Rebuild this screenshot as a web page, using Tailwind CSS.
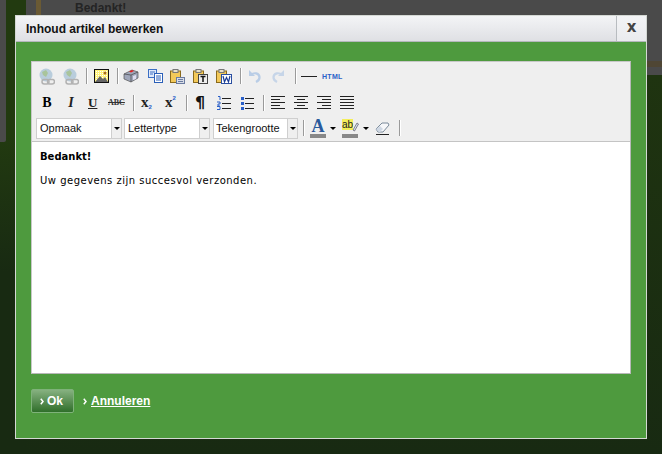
<!DOCTYPE html>
<html lang="en">
<head>
  <meta charset="UTF-8" />
  <title>Inhoud artikel bewerken</title>
  <script src="https://cdn.jsdelivr.net/npm/@tailwindcss/browser@4"></script>
</head>
<body class="relative w-[662px] h-[454px] overflow-hidden bg-[#182a12] font-['Liberation_Sans',sans-serif]">
  <!-- page behind the overlay -->
  <div class="flex h-full">
    <div class="w-[26px] shrink-0 bg-gradient-to-b from-[#223a10] to-[#182a12] from-30% to-60%">
      <div class="w-[6px] h-[142px] bg-[#4a4a4a] rounded-br-[2px]"></div>
    </div>
    <div class="flex-1 flex flex-col">
      <div class="h-[61px] flex bg-[#4a4a4a]">
        <div class="w-[10px]"></div>
        <div class="w-[5px] bg-[#6a5a34]"></div>
        <div class="ml-[34px] text-[12px] leading-[17px] font-bold text-[#242424]">Bedankt!</div>
      </div>
      <div class="h-[6px] bg-[#4f4634]"></div>
      <div class="h-[8px] bg-[#4a4a4a]"></div>
      <div class="flex-1 bg-gradient-to-b from-[#1f3410] to-[#182a12]"></div>
    </div>
  </div>

  <!-- Dialog -->
  <div class="absolute left-[15px] top-[15px] w-[632px] h-[424px] bg-[#4e9a3e] border border-[#d4d8d4] flex flex-col">
    <div class="h-[26px] flex bg-gradient-to-b from-[#f3f4f6] to-[#dfe0e4] border-b border-[#b4b8bc]">
      <div class="flex-1 pl-[10px] pt-[5px] text-[12px] leading-[16px] font-bold text-[#111]">Inhoud artikel bewerken</div>
      <div class="w-[30px] border-l border-[#b8bcc0] bg-gradient-to-b from-[#f3f4f6] to-[#eaebee] flex items-center justify-center text-[15px] font-bold text-[#444] font-['DejaVu_Sans',sans-serif] pb-[3px]">x</div>
    </div>

    <div class="ml-[15px] mt-[19px] w-[600px] h-[313px] border border-[#c8c8c8] border-r-[#b8b8b8] border-b-[#b8b8b8] bg-white flex flex-col">
      <!-- toolbar -->
      <div class="h-[80px] bg-[#efefef] border-b border-[#c4c4c4] flex flex-col">
        <div class="h-[28px] flex items-center pl-[7px]">
          <svg width="16" height="17" viewBox="0 0 16 17"><circle cx="7" cy="7" r="6.500" fill="#b9cddc"/><path d="M3 4l4-2 2 3-2 4-3-2z" fill="#a9c49b"/><g fill="none" stroke="#b2b2b2" stroke-width="1.500"><rect x="3" y="11.500" width="7" height="4.500" rx="2.200"/><rect x="8.500" y="11.500" width="7" height="4.500" rx="2.200"/></g></svg>
          <svg class="ml-[8px]" width="16" height="17" viewBox="0 0 16 17"><circle cx="7" cy="7" r="6.500" fill="#b9cddc"/><path d="M3 4l4-2 2 3-2 4-3-2z" fill="#a9c49b"/><g fill="none" stroke="#b2b2b2" stroke-width="1.500"><rect x="3" y="11.500" width="7" height="4.500" rx="2.200"/><rect x="8.500" y="11.500" width="7" height="4.500" rx="2.200"/></g></svg>
          <div class="w-[2px] h-[16px] bg-[#9a9a9a] border-r border-white ml-[7px]"></div>
          <svg class="ml-[6px]" width="15" height="14" viewBox="0 0 15 14"><defs><pattern id="dots" width="2" height="2" patternUnits="userSpaceOnUse"><rect width="2" height="2" fill="#fff27a"/><rect width="1" height="1" fill="#fff"/></pattern></defs><rect x=".5" y=".5" width="14" height="13" fill="url(#dots)" stroke="#111"/><path d="M1 13l5-6 3 3 2-2 3 5z" fill="#666"/><circle cx="11" cy="4" r="1.500" fill="#a86a1c"/></svg>
          <div class="w-[2px] h-[16px] bg-[#9a9a9a] border-r border-white ml-[8px]"></div>
          <svg class="ml-[4px]" width="16" height="14" viewBox="0 0 16 14"><path d="M1 5l8-4 6 2v6l-7 4-7-3z" fill="#a0a7ba" stroke="#555" stroke-width=".7"/><path d="M6 2.500L9 1l2 1-3 1.500z" fill="#e02020"/><path d="M8 6l7-3M8 6v7M8 6L1 5" stroke="#444" stroke-width=".7" fill="none"/><path d="M10 7l3-1v4l-3 1z" fill="#dde"/></svg>
          <svg class="ml-[9px]" width="15" height="14" viewBox="0 0 15 14"><rect x=".5" y=".5" width="8" height="8" fill="#dfe9fa" stroke="#3c6fc4"/><path d="M2 3h5M2 5h3" stroke="#3c6fc4"/><rect x="6.500" y="4.500" width="8" height="9" fill="#fff" stroke="#2a5fb8"/><path d="M8 7h5M8 9h5M8 11h5" stroke="#2a5fb8"/></svg>
          <svg class="ml-[7px]" width="15" height="15" viewBox="0 0 15 15"><rect x=".5" y="2" width="10" height="11.500" fill="#f3c959" stroke="#8a6a1c"/><rect x="3" y=".5" width="5" height="3" fill="#e8e0c8" stroke="#777"/><rect x="6.500" y="8.500" width="8" height="6" fill="#d9dde6" stroke="#6a7ba0"/><path d="M8 10.500h5M8 12.500h5" stroke="#6a7ba0"/></svg>
          <svg class="ml-[8px]" width="15" height="15" viewBox="0 0 15 15"><rect x=".5" y="2" width="10" height="11.500" fill="#f3c959" stroke="#8a6a1c"/><rect x="3" y=".5" width="5" height="3" fill="#e8e0c8" stroke="#777"/><rect x="5.500" y="5.500" width="9" height="9" fill="#eee" stroke="#444"/><path d="M7.500 7.500h5M10 7.500v5.500" stroke="#111" stroke-width="1.500"/></svg>
          <svg class="ml-[8px]" width="16" height="15" viewBox="0 0 16 15"><rect x=".5" y="2" width="10" height="11.500" fill="#f3c959" stroke="#8a6a1c"/><rect x="3" y=".5" width="5" height="3" fill="#e8e0c8" stroke="#777"/><rect x="5.500" y="5.500" width="10" height="9" fill="#fff" stroke="#2a4fa0"/><path d="M7 7l1.500 6 2-4.500 2 4.500L14 7" fill="none" stroke="#1a3c96" stroke-width="1.200"/></svg>
          <div class="w-[2px] h-[16px] bg-[#9a9a9a] border-r border-white ml-[8px]"></div>
          <svg class="ml-[6px]" width="13" height="14" viewBox="0 0 13 14"><path d="M1 1v6h6z" fill="#b9cde6"/><path d="M3 6c3-3 8-2 8.500 2 .2 2.500-1.500 4-3.500 5" fill="none" stroke="#b9cde6" stroke-width="2.200"/></svg>
          <svg class="ml-[11px]" width="13" height="14" viewBox="0 0 13 14"><path d="M12 1v6H6z" fill="#c6d5e8"/><path d="M10 6C7 3 2 4 1.500 8c-.2 2.500 1.500 4 3.500 5" fill="none" stroke="#c6d5e8" stroke-width="2.200"/></svg>
          <div class="w-[2px] h-[16px] bg-[#9a9a9a] border-r border-white ml-[10px]"></div>
          <div class="ml-[4px] w-[16px] h-px bg-[#222]"></div>
          <span class="ml-[5px] text-[7px] leading-none font-bold tracking-[0.3px] text-[#2a5fc8]">HTML</span>
        </div>
        <div class="h-[25px] flex items-center pl-[10px]">
          <span class="w-[10px] text-center text-[14px] leading-none font-bold font-['Liberation_Serif',serif] text-black">B</span>
          <span class="w-[8px] ml-[15px] text-center text-[14px] leading-none font-bold italic font-['Liberation_Serif',serif] text-[#222]">I</span>
          <span class="w-[9px] ml-[13px] text-center text-[13px] leading-none font-bold underline font-['Liberation_Serif',serif] text-[#222]">U</span>
          <span class="w-[16px] ml-[11px] text-center text-[8px] leading-none font-bold line-through font-['Liberation_Serif',serif] text-[#333]">ABC</span>
          <div class="w-[2px] h-[16px] bg-[#9a9a9a] border-r border-white ml-[9px]"></div>
          <div class="w-[13px] ml-[6px] flex items-end"><span class="text-[15px] leading-[15px] font-bold font-['Liberation_Serif',serif] text-[#222]">x</span><span class="text-[6px] leading-[6px] font-bold text-[#2a5fc8]">2</span></div>
          <div class="w-[13px] ml-[11px] flex items-start"><span class="text-[15px] leading-[15px] font-bold font-['Liberation_Serif',serif] text-[#222]">x</span><span class="text-[6px] leading-[6px] font-bold text-[#2a5fc8]">2</span></div>
          <div class="w-[2px] h-[16px] bg-[#9a9a9a] border-r border-white ml-[8px]"></div>
          <span class="w-[11px] ml-[7px] text-[16px] leading-none font-bold text-[#111] font-['DejaVu_Sans',sans-serif]">¶</span>
          <svg class="ml-[11px]" width="14" height="14" viewBox="0 0 14 14"><path d="M5 2.500h9M5 7.500h9M5 12.500h9" stroke="#222"/><path d="M1 .5h2v3.500M0 6h3v2H1v2h2M0 10.500h3v3H0" fill="none" stroke="#2a5fc8"/></svg>
          <svg class="ml-[9px]" width="14" height="14" viewBox="0 0 14 14"><path d="M5 2.500h9M5 7.500h9M5 12.500h9" stroke="#222"/><path d="M1 1h3v3H1zM1 6h3v3H1zM1 11h3v3H1z" fill="#2a5fc8"/></svg>
          <div class="w-[2px] h-[16px] bg-[#9a9a9a] border-r border-white ml-[9px]"></div>
          <svg class="ml-[6px]" width="14" height="13" viewBox="0 0 14 13"><path d="M0 .5h14M0 3.500h9M0 6.500h14M0 9.500h9M0 12.500h14" stroke="#222"/></svg>
          <svg class="ml-[9px]" width="14" height="13" viewBox="0 0 14 13"><path d="M0 .5h14M3 3.500h8M0 6.500h14M3 9.500h8M0 12.500h14" stroke="#222"/></svg>
          <svg class="ml-[9px]" width="14" height="13" viewBox="0 0 14 13"><path d="M0 .5h14M5 3.500h9M0 6.500h14M5 9.500h9M0 12.500h14" stroke="#222"/></svg>
          <svg class="ml-[9px]" width="14" height="13" viewBox="0 0 14 13"><path d="M0 .5h14M0 3.500h14M0 6.500h14M0 9.500h14M0 12.500h14" stroke="#222"/></svg>
        </div>
        <div class="h-[26px] flex items-center pl-[4px]">
          <div class="w-[86px] h-[21px] flex border border-[#cfcfcf] bg-white">
            <div class="flex-1 pl-[3px] text-[11px] leading-[19px] text-[#111]">Opmaak</div>
            <div class="w-[10px] border-l border-[#cfcfcf] bg-[#efefef] flex items-center justify-center"><div class="border-x-[3px] border-x-transparent border-t-[3px] border-t-black"></div></div>
          </div>
          <div class="ml-[2px] w-[86px] h-[21px] flex border border-[#cfcfcf] bg-white">
            <div class="flex-1 pl-[3px] text-[11px] leading-[19px] text-[#111]">Lettertype</div>
            <div class="w-[10px] border-l border-[#cfcfcf] bg-[#efefef] flex items-center justify-center"><div class="border-x-[3px] border-x-transparent border-t-[3px] border-t-black"></div></div>
          </div>
          <div class="ml-[3px] w-[85px] h-[21px] flex border border-[#cfcfcf] bg-white">
            <div class="flex-1 pl-[2px] text-[11px] leading-[19px] text-[#111]">Tekengrootte</div>
            <div class="w-[10px] border-l border-[#cfcfcf] bg-[#efefef] flex items-center justify-center"><div class="border-x-[3px] border-x-transparent border-t-[3px] border-t-black"></div></div>
          </div>
          <div class="w-[2px] h-[16px] bg-[#9a9a9a] border-r border-white ml-[5px]"></div>
          <div class="ml-[5px] w-[16px] flex flex-col items-center"><span class="text-[18px] leading-[15px] font-bold font-['Liberation_Serif',serif] text-[#2a5a9c]">A</span><div class="w-[16px] h-[4px] bg-[#888]"></div></div>
          <div class="ml-[4px] border-x-[3px] border-x-transparent border-t-[3px] border-t-black"></div>
          <div class="ml-[6px] w-[16px] flex flex-col items-start">
            <div class="flex h-[15px]">
              <span class="h-[11px] text-[10px] leading-[11px] bg-[#f4ee5a] text-[#222]">ab</span>
              <svg class="-ml-[1px] mt-[1px]" width="7" height="12" viewBox="0 0 7 12"><path d="M1 10l4-7 1.500 1-4 7z" fill="#dbe3ee" stroke="#556" stroke-width=".7"/></svg>
            </div>
            <div class="w-[16px] h-[4px] bg-[#888]"></div>
          </div>
          <div class="ml-[5px] border-x-[3px] border-x-transparent border-t-[3px] border-t-black"></div>
          <svg class="ml-[6px]" width="15" height="14" viewBox="0 0 15 14"><path d="M1 8l6-6h6l1 2-6 7H3z" fill="#f6f7f9" stroke="#7a8a9a"/><path d="M1 8l3 3 1 0 3-3-3-3z" fill="#cfd8e4"/><path d="M1 13.500h13" stroke="#222"/></svg>
          <div class="w-[2px] h-[16px] bg-[#9a9a9a] border-r border-white ml-[9px]"></div>
        </div>
      </div>
      <!-- editor body -->
      <div class="flex-1 px-[8px] pt-[9px] font-['DejaVu_Sans',sans-serif] text-[10px] leading-[12px] text-black">
        <p class="font-bold">Bedankt!</p>
        <p class="mt-[12px] tracking-[0.5px]">Uw gegevens zijn succesvol verzonden.</p>
      </div>
    </div>

    <div class="ml-[15px] mt-[15px] flex items-center">
      <button class="w-[43px] h-[24px] rounded-[2px] border border-[#7fb27a] bg-gradient-to-b from-[#86b180] to-[#2f6f2a] text-white text-[12px] font-bold flex items-center pl-[8px] gap-[3px]">
        <svg width="4" height="7" viewBox="0 0 4 7"><path d="M.8 .8L3 3.500.8 6.200" fill="none" stroke="#fff" stroke-width="1.500"/></svg>Ok
      </button>
      <svg class="ml-[9px]" width="4" height="7" viewBox="0 0 4 7"><path d="M.8 .8L3 3.500.8 6.200" fill="none" stroke="#fff" stroke-width="1.500"/></svg>
      <a href="#" class="ml-[4px] text-white text-[12px] font-bold underline">Annuleren</a>
    </div>
  </div>
</body>
</html>
